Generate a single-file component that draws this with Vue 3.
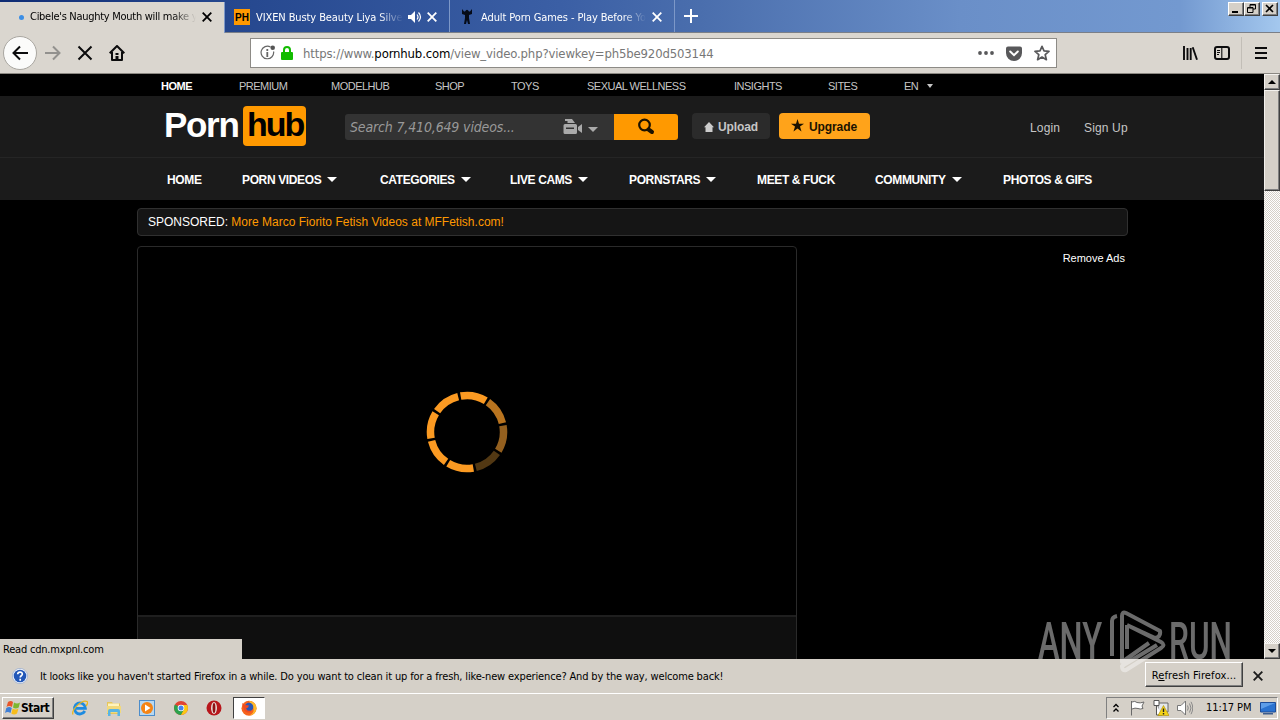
<template>
  <div class="screen">
    <header class="tabs">
      <div v-for="tab in tabs" :key="tab.title" class="tab" :class="{ active: tab.active }">
        <span v-if="tab.icon === 'dot'" class="tab-icon"><i class="loading-dot"></i></span>
        <span v-else-if="tab.icon === 'ph'" class="tab-icon ph">PH</span>
        <svg v-else class="tab-icon" viewBox="0 0 16 16">
          <path d="M3 0l2 2.500h1Q8-1 10 2.500h1L13 0v5l-3 1v3l1 6H9l-1-4-1 4H5l1-6V6L3 5z" fill="#050b18" />
        </svg>
        <span class="tab-title">{{ tab.title }}</span>
        <svg v-if="tab.sound" class="sound" viewBox="0 0 14 14">
          <path d="M0 5h3l4-4v12L3 9H0z" fill="currentColor" />
          <path d="M9 4.500q2 2.500 0 5M10.500 2.500q4 4.500 0 9" fill="none" stroke="currentColor" stroke-width="1.200" />
        </svg>
        <svg class="tab-close" viewBox="0 0 10 10">
          <path d="M.7.7l8.600 8.600M9.300.7L.7 9.300" stroke="currentColor" stroke-width="1.800" />
        </svg>
      </div>
      <svg class="new-tab" viewBox="0 0 14 14">
        <path d="M7 0v14M0 7h14" stroke="#fff" stroke-width="2" />
      </svg>
      <div class="window-buttons">
        <span class="win-btn"><svg viewBox="0 0 13 11"><path d="M3 9h6" stroke="#000" stroke-width="2" /></svg></span>
        <span class="win-btn"><svg viewBox="0 0 13 11"><path d="M5 4V1.500h5.500V6H8M5 2h5M2.500 4.500H8V9.500H2.500zM3 5h5" fill="none" stroke="#000" /></svg></span>
        <span class="win-btn close"><svg viewBox="0 0 13 11"><path d="M3 2l7 7M10 2L3 9" stroke="#000" stroke-width="1.600" /></svg></span>
      </div>
    </header>

    <div class="toolbar">
      <span class="back">
        <svg viewBox="0 0 16 16"><path d="M16 8H1.500M8 1.500L1.500 8 8 14.500" fill="none" stroke="#0c0c0d" stroke-width="2" /></svg>
      </span>
      <svg class="tool forward" viewBox="0 0 16 16"><path d="M0 8h14.500M8 1.500L14.500 8 8 14.500" fill="none" stroke="#92918e" stroke-width="2" /></svg>
      <svg class="tool stop" viewBox="0 0 16 16"><path d="M1.500 1.500l13 13M14.500 1.500l-13 13" stroke="#0c0c0d" stroke-width="2" /></svg>
      <svg class="tool home" viewBox="0 0 16 16">
        <path d="M.7 8.300L8 1l7.300 7.300M3 7v8h10V7" fill="none" stroke="#0c0c0d" stroke-width="2" stroke-linejoin="round" />
        <path d="M6.500 8h3v2h-3zM6.500 11h3v4h-3z" fill="#0c0c0d" />
      </svg>
      <div class="urlbar">
        <svg class="info" viewBox="0 0 16 16">
          <path d="M10.500 2A6.300 6.300 0 1 0 13.600 6.500" fill="none" stroke="#666" stroke-width="1.200" />
          <path d="M7.300 4v2M7.300 7v5" stroke="#666" stroke-width="1.800" />
          <circle cx="12.700" cy="2.800" r="2.300" fill="#555" />
        </svg>
        <svg class="lock" viewBox="0 0 12 14">
          <path d="M3 7V4a3 3 0 0 1 6 0v3" fill="none" stroke="#12bc00" stroke-width="2" />
          <rect y="6" width="12" height="8" rx="1" fill="#12bc00" />
        </svg>
        <span class="url">https://www.<b>pornhub.com</b>/view_video.php?viewkey=ph5be920d503144</span>
        <svg class="dots" viewBox="0 0 16 4"><circle v-for="x in [2, 8, 14]" :key="x" :cx="x" cy="2" r="1.900" fill="#58585a" /></svg>
        <svg class="pocket" viewBox="0 0 16 15">
          <path d="M2 .5h12a2 2 0 0 1 2 2V7a8 8 0 0 1-16 0V2.500a2 2 0 0 1 2-2z" fill="#58585a" />
          <path d="M4.200 5.500L8 9.200l3.800-3.700" fill="none" stroke="#fff" stroke-width="2" stroke-linecap="round" />
        </svg>
        <svg class="star" viewBox="0 0 16 16">
          <path d="M8 1.300l2 4.600 5 .5-3.800 3.300 1.200 5L8 12l-4.400 2.700 1.200-5L1 6.400l5-.5z" fill="none" stroke="#58585a" stroke-width="1.700" stroke-linejoin="round" />
        </svg>
      </div>
      <svg class="library" viewBox="0 0 16 16"><path d="M2 1v14M5.500 3v12M8.700 3v12M10.700 2.300l4.300 12.500" fill="none" stroke="#0c0c0d" stroke-width="1.900" /></svg>
      <svg class="sidebar" viewBox="0 0 16 14">
        <rect x="1" y="1" width="14" height="12" rx="2" fill="none" stroke="#0c0c0d" stroke-width="2" />
        <path d="M7.800 1v12M3 4.500h3M3 6.500h3M3 8.500h2" stroke="#0c0c0d" stroke-width="1.100" />
      </svg>
      <i class="divider"></i>
      <svg class="menu" viewBox="0 0 12 12"><path d="M0 1h12M0 6h12M0 11h12" stroke="#0c0c0d" stroke-width="2" /></svg>
    </div>

    <div class="viewport">
      <main class="page">
        <nav class="network">
          <span v-for="(link, i) in networkLinks" :key="link" :class="{ current: i === 0 }">{{ link }}<i v-if="link === 'EN'" class="caret small"></i></span>
        </nav>
        <div class="head">
          <div class="logo"><span>Porn</span><span class="hub">hub</span></div>
          <div class="search">
            <span class="placeholder">Search 7,410,649 videos...</span>
            <svg class="camera" viewBox="0 0 20 16">
              <path d="M2 0h7l3 4H4.500V2H2z" fill="#aaa" />
              <path fill-rule="evenodd" d="M2 5h10.500A1.500 1.500 0 0 1 14 6.500v7a1.500 1.500 0 0 1-1.500 1.500H2A1.500 1.500 0 0 1 .5 13.500v-7A1.500 1.500 0 0 1 2 5zM3 8.500V10h8V8.500z" fill="#aaa" />
              <path d="M15 8l4-3v9l-4-3z" fill="#aaa" />
            </svg>
            <i class="caret grey"></i>
          </div>
          <span class="search-btn">
            <svg viewBox="0 0 18 18"><circle cx="7.500" cy="7" r="5.300" fill="none" stroke="#1b1200" stroke-width="2.200" /><path d="M11.500 11.500l3.500 2.500" stroke="#1b1200" stroke-width="4" stroke-linecap="round" /></svg>
          </span>
          <span class="upload">
            <svg viewBox="0 0 10 10"><path d="M5 0l5 5.200H8.500V10h-7V5.200H0z" fill="#ccc" /></svg>
            <b>Upload</b>
          </span>
          <span class="upgrade">
            <svg viewBox="0 0 14 14"><path d="M7 0l1.600 5H14L9.700 8.200 11.300 13.500 7 10.300 2.700 13.500 4.300 8.200 0 5h5.400z" fill="#1b1200" /></svg>
            <b>Upgrade</b>
          </span>
          <span class="login">Login</span>
          <span class="signup">Sign Up</span>
        </div>
        <nav class="main-nav">
          <span v-for="item in menu" :key="item.label">{{ item.label }}<i v-if="item.more" class="caret"></i></span>
        </nav>
        <div class="sponsored"><span>SPONSORED:</span> <a>More Marco Fiorito Fetish Videos at MFFetish.com!</a></div>
        <div class="content">
          <section class="player">
            <div class="video">
              <svg class="spinner" viewBox="-42 -42 84 84">
                <circle
                  v-for="(color, i) in spinner"
                  :key="i"
                  r="36.500"
                  fill="none"
                  :stroke="color"
                  stroke-width="7.500"
                  pathLength="360"
                  stroke-dasharray="41 319"
                  :transform="`rotate(${i * 45 - 100})`"
                />
              </svg>
            </div>
            <div class="player-footer"></div>
          </section>
          <span class="remove-ads">Remove Ads</span>
        </div>
        <div class="status">Read cdn.mxpnl.com</div>
      </main>
      <div class="scrollbar">
        <span class="scroll-btn"><i class="up"></i></span>
        <span class="thumb"></span>
        <span class="scroll-btn bottom"><i class="down"></i></span>
      </div>
    </div>

    <div class="notification">
      <svg class="help" viewBox="0 0 16 16">
        <circle cx="8" cy="8" r="7.600" fill="#eef3fb" stroke="#8ba3cc" stroke-width=".6" />
        <circle cx="8" cy="8" r="6.300" fill="#2257b8" />
        <path d="M5.700 6.300C5.800 3.300 10.500 3.500 10.300 6.200 10.200 7.800 8.200 7.700 8.200 9.500M8.200 10.800v2" fill="none" stroke="#fff" stroke-width="1.700" />
      </svg>
      <span class="message">It looks like you haven't started Firefox in a while. Do you want to clean it up for a fresh, like-new experience? And by the way, welcome back!</span>
      <span class="refresh">R<u>e</u>fresh Firefox...</span>
      <svg class="dismiss" viewBox="0 0 10 10"><path d="M.7.7l8.600 8.600M9.300.7L.7 9.300" stroke="#1c1c1c" stroke-width="1.900" /></svg>
    </div>

    <footer class="taskbar">
      <span class="start">
        <svg viewBox="0 0 16 15">
          <path d="M3 2q3-2 5 0L7 7q-3-2-5.500 0z" fill="#e8562a" />
          <path d="M9 2.500q3 2 6 0L13.700 7.500q-3 2-5.700 0z" fill="#7db72f" />
          <path d="M1.300 8q3-2 5.500 0L5.500 13q-3-2-5.500 0z" fill="#3f7fd6" />
          <path d="M7.700 8.500q3 2 5.800 0L12 13.500q-3 2-5.700 0z" fill="#f7bd1c" />
        </svg>
        <b>Start</b>
      </span>
      <svg class="app" viewBox="0 0 16 16">
        <path d="M12.800 11A5.500 5.500 0 1 1 13.400 8.300H4" fill="none" stroke="#1d8be0" stroke-width="2.800" />
        <path d="M1 14.500C-1 10 10-1 15 1.500c1.300 1 .2 3-1 4.500" fill="none" stroke="#e9b71d" stroke-width="1.300" />
      </svg>
      <svg class="app" viewBox="0 0 16 16">
        <path d="M1 2h5l1 1.500h7V14H1z" fill="#e6c65c" />
        <path d="M2 3.500h11V8H2z" fill="#fff3bd" />
        <path d="M1 6h14v7H1z" fill="#f2d97b" />
        <path d="M2 16v-5q0-2 2-2h8q2 0 2 2v5h-2.500v-4h-7v4z" fill="#58b4e4" />
      </svg>
      <svg class="app" viewBox="0 0 16 16">
        <rect x=".5" y=".5" width="15" height="15" fill="#b7d8f1" stroke="#4c8dcb" />
        <circle cx="8" cy="8" r="6" fill="#f58414" />
        <path d="M6 4.500L11.500 8 6 11.500z" fill="#fff" />
      </svg>
      <svg class="app" viewBox="0 0 16 16">
        <circle cx="8" cy="8" r="7" fill="#e04434" />
        <path d="M8 8L1.900 4.600A7 7 0 0 0 8 15l3.500-6z" fill="#2ca24c" />
        <path d="M8 15a7 7 0 0 0 6.200-10H8l3 4.500z" fill="#fbc814" />
        <circle cx="8" cy="8" r="3.300" fill="#fff" />
        <circle cx="8" cy="8" r="2.500" fill="#4484ee" />
      </svg>
      <svg class="app" viewBox="0 0 16 16">
        <circle cx="8" cy="8" r="7.500" fill="#b8161c" />
        <ellipse cx="8" cy="8" rx="3" ry="6" fill="#e6d9d5" />
        <ellipse cx="8" cy="8" rx="1.400" ry="5" fill="#8e1014" />
      </svg>
      <span class="running">
        <svg viewBox="0 0 16 16">
          <circle cx="8" cy="8.300" r="7.500" fill="#f6631c" />
          <path d="M8 1c4 0 7.500 3 7.500 7s-3 7-7 7.500c4-2 5-5 3.500-8S9 4 8 1z" fill="#fdb92a" />
          <circle cx="8" cy="7" r="4.300" fill="#2a57b7" />
          <path d="M1 3l3 2 4 .5-1 2-2 1 1.500 2 4 .2C9 13.500 5 13 3 10z" fill="#ef4b22" />
        </svg>
      </span>
      <div class="tray">
        <svg class="chevrons" viewBox="0 0 6 10"><path d="M.5 4L3 1.500 5.500 4M.5 8.500L3 6l2.500 2.500" fill="none" stroke="#000" stroke-width="1.300" /></svg>
        <svg class="tray-icon" viewBox="0 0 16 16"><path d="M2.500 1v14.500M3 2q3-1.500 5 .5 3 1 7-.5l-2 4 1 2.500q-3 1-5 0Q6 7.500 3 9" fill="#fff" stroke="#6a6a6a" /></svg>
        <svg class="tray-icon net" viewBox="0 0 16 16">
          <path d="M5 3h10v9H5z" fill="#e4e7ea" stroke="#666" />
          <path d="M1 .5h5v5H1zM3.500 5v10H9" fill="#fff" stroke="#555" />
          <path d="M10.500 5.500l5.500 10H5z" fill="#f5d316" stroke="#a98c00" stroke-width=".6" />
          <path d="M10.500 8.500v3.500M10.500 13v1.500" stroke="#222" stroke-width="1.400" />
        </svg>
        <svg class="tray-icon vol" viewBox="0 0 16 16">
          <path d="M.5 5.500H4L8.500 1v14L4 10.500H.5z" fill="#fff" stroke="#777" />
          <path d="M10.500 5.500q1.500 2.500 0 5M12.500 3.500q3 4.500 0 9M14 1.800q3.500 6.200 0 12.400" fill="none" stroke="#888" />
        </svg>
        <span class="clock">11:17 PM</span>
        <svg class="desktop" viewBox="0 0 16 14">
          <path d="M.5 1.500h15v9.500H.5z" fill="#2a72cf" stroke="#1d4c98" />
          <path d="M1 2h14L1 8z" fill="#5d9de8" />
          <path d="M3 12h10v1.500H3z" fill="#3c5c8c" />
        </svg>
      </div>
    </footer>

    <svg class="watermark" viewBox="0 0 200 70">
      <g class="wm-text">
        <text x="0" y="53" textLength="64" lengthAdjust="spacingAndGlyphs">ANY</text>
        <text x="131" y="53" textLength="63" lengthAdjust="spacingAndGlyphs">RUN</text>
      </g>
      <path
        d="M74 50V15q0-4 5-5M89 19l28 13q6-1 5-7L88 7q-4-2-4 3v46l27-19M89 19v24M89 19l34 17q5 3 0 6L88 64q-4 1-4-4l35-21"
        fill="none"
        stroke="#fff"
        stroke-width="4"
        stroke-linejoin="round"
      />
    </svg>
  </div>
</template>

<script setup>
const tabs = [
  { title: "Cibele's Naughty Mouth will make yo", icon: 'dot', active: true },
  { title: 'VIXEN Busty Beauty Liya Silver', icon: 'ph', sound: true },
  { title: 'Adult Porn Games - Play Before You', icon: 'game' }
]

const networkLinks = ['HOME', 'PREMIUM', 'MODELHUB', 'SHOP', 'TOYS', 'SEXUAL WELLNESS', 'INSIGHTS', 'SITES', 'EN']

const menu = [
  { label: 'HOME' },
  { label: 'PORN VIDEOS', more: true },
  { label: 'CATEGORIES', more: true },
  { label: 'LIVE CAMS', more: true },
  { label: 'PORNSTARS', more: true },
  { label: 'MEET & FUCK' },
  { label: 'COMMUNITY', more: true },
  { label: 'PHOTOS & GIFS' }
]

const spinner = ['#fb9a22', '#b9741f', '#94601f', '#523813', '#fb9a22', '#fb9a22', '#fb9a22', '#fb9a22']
</script>

<style>
body {
  margin: 0;
  overflow: hidden;
}
</style>

<style scoped>
.screen {
  position: relative;
  display: flex;
  flex-direction: column;
  width: 1280px;
  height: 720px;
  overflow: hidden;
  background: #d5d0c8;
  color: #000;
  font-family: "DejaVu Sans Condensed", "DejaVu Sans", sans-serif;
  font-stretch: condensed;
  font-size: 11px;
  white-space: nowrap;
}

.screen * {
  box-sizing: border-box;
}

svg {
  display: block;
  flex: none;
}

/* tab strip */
.tabs {
  display: flex;
  height: 33px;
  background: linear-gradient(90deg, #0f2c74 0, #25478e 225px, #3b5fa5 560px, #4a6ead 700px, #6a8fc8 960px, #7399d0 1180px, #a4c8ee 1280px);
  border-bottom: 1px solid #7a7f88;
}

.tab {
  display: flex;
  align-items: center;
  width: 225px;
  height: 32px;
  padding: 2px 12px 0 9px;
  color: #fff;
  border-right: 1px solid #7d98c8;
}

.tab.active {
  height: 31px;
  margin-top: 2px;
  padding: 0 12px 2px 14px;
  background: #dad6cf;
  color: #000;
}

.tab-icon {
  flex: none;
  width: 16px;
  height: 16px;
  margin-right: 6px;
}

.active .tab-icon {
  margin-right: 0;
}

.loading-dot {
  display: block;
  width: 5px;
  height: 5px;
  margin: 6px 0 0 5px;
  border-radius: 50%;
  background: #3b8ee5;
}

.ph {
  background: #f90;
  color: #000;
  font: bold 10px/17px "Liberation Sans", sans-serif;
  text-align: center;
}

.tab-title {
  flex: 1;
  overflow: hidden;
  letter-spacing: -0.1px;
  mask-image: linear-gradient(90deg, #000 calc(100% - 24px), transparent);
}

.active .tab-title {
  letter-spacing: -0.28px;
}

.sound {
  width: 14px;
  height: 14px;
  margin: 0 5px 0 5px;
}

.tab-close {
  width: 10px;
  height: 10px;
  margin-left: 6px;
}

.sound + .tab-close {
  margin-left: 0;
}

.new-tab {
  width: 14px;
  height: 14px;
  margin: 9px 0 0 9px;
}

.window-buttons {
  display: flex;
  margin: 2px 2px 0 auto;
}

.win-btn {
  width: 16px;
  height: 14px;
  background: #d5d0c8;
  border: 1px solid;
  border-color: #fff #404040 #404040 #fff;
  box-shadow: inset -1px -1px #808080;
}

.win-btn.close {
  margin-left: 2px;
}

.win-btn svg {
  width: 13px;
  height: 11px;
}

/* toolbar */
.toolbar {
  display: flex;
  align-items: center;
  height: 41px;
  padding-left: 3px;
  background: #dad6cf;
  border-bottom: 1px solid #8b8882;
}

.back {
  display: flex;
  align-items: center;
  justify-content: center;
  width: 34px;
  height: 34px;
  border: 1px solid #a9a6a0;
  border-radius: 50%;
  background: #fbfbfa;
}

.back svg,
.tool {
  width: 16px;
  height: 16px;
}

.forward {
  margin-left: 8px;
}

.stop {
  margin-left: 16px;
}

.home {
  margin-left: 16px;
}

.urlbar {
  display: flex;
  align-items: center;
  width: 807px;
  height: 30px;
  margin-left: 125px;
  padding: 0 6px 0 9px;
  background: #fff;
  border: 1px solid #8d8b86;
}

.info {
  width: 16px;
  height: 16px;
}

.lock {
  width: 12px;
  height: 14px;
  margin: 0 10px 0 5px;
}

.url {
  color: #777;
  font-size: 13px;
  letter-spacing: -0.15px;
}

.url b {
  color: #000;
  font-weight: normal;
}

.dots {
  width: 16px;
  height: 4px;
  margin-left: auto;
}

.pocket {
  width: 16px;
  height: 15px;
  margin-left: 12px;
}

.star {
  width: 16px;
  height: 16px;
  margin-left: 12px;
}

.library {
  width: 16px;
  height: 16px;
  margin-left: 125px;
}

.sidebar {
  width: 16px;
  height: 14px;
  margin-left: 16px;
}

.divider {
  width: 1px;
  height: 32px;
  margin-left: 11px;
  background: #c2beb7;
}

.menu {
  width: 12px;
  height: 12px;
  margin-left: 13px;
}

/* page */
.viewport {
  display: flex;
  height: 585px;
}

.page {
  position: relative;
  width: 1264px;
  height: 585px;
  overflow: hidden;
  background: #000;
  color: #fff;
  font-family: "Liberation Sans", Arial, sans-serif;
  font-stretch: normal;
}

.network {
  display: grid;
  grid-template-columns: 78px 92px 104px 76px 76px 147px 94px 76px auto;
  height: 22px;
  padding-left: 161px;
  line-height: 24px;
  color: #c6c6c6;
  letter-spacing: -0.5px;
}

.network .current {
  color: #fff;
  font-weight: bold;
}

.caret {
  display: inline-block;
  margin-left: 6px;
  border: 5px solid transparent;
  border-top-color: #fff;
  border-bottom: 0;
  vertical-align: 2px;
}

.caret.small {
  margin-left: 9px;
  border-width: 4px 3px 0;
  border-top-color: #c6c6c6;
}

.caret.grey {
  margin: 5px 0 0 5px;
  border-top-color: #aaa;
}

.head {
  display: flex;
  height: 62px;
  padding: 10px 0 0 164px;
  background: #1b1b1b;
  border-bottom: 1px solid #252525;
}

.logo {
  display: flex;
  width: 142px;
  height: 40px;
  font: bold 35px/37px "Liberation Sans", sans-serif;
  letter-spacing: -1.3px;
}

.logo > span:first-child {
  width: 79px;
}

.logo .hub {
  width: 63px;
  height: 40px;
  padding-left: 4px;
  border-radius: 4px;
  background: #f90;
  color: #000;
  font-size: 34px;
  letter-spacing: -2px;
}

.search {
  display: flex;
  align-items: center;
  width: 269px;
  height: 26px;
  margin: 8px 0 0 39px;
  padding: 0 16px 0 5px;
  background: #333;
  border-radius: 3px 0 0 3px;
}

.placeholder {
  flex: 1;
  color: #999;
  font: italic 14px "DejaVu Sans Condensed", "DejaVu Sans", sans-serif;
  letter-spacing: -0.15px;
}

.camera {
  width: 20px;
  height: 16px;
}

.search-btn {
  display: flex;
  align-items: center;
  justify-content: center;
  width: 64px;
  height: 26px;
  margin-top: 8px;
  background: #f90;
  border-radius: 0 3px 3px 0;
}

.search-btn svg {
  width: 18px;
  height: 18px;
}

.upload,
.upgrade {
  display: flex;
  align-items: center;
  height: 26px;
  margin: 7px 0 0 14px;
  padding-top: 1px;
  border-radius: 4px;
  font-size: 12px;
  letter-spacing: -0.1px;
}

.upload {
  width: 78px;
  padding-left: 12px;
  background: #2b2b2b;
  color: #c6c6c6;
}

.upload svg {
  width: 10px;
  height: 10px;
  margin-right: 4px;
}

.upgrade {
  width: 91px;
  margin-left: 9px;
  padding-left: 12px;
  background: #ffa31a;
  color: #1b1200;
}

.upgrade svg {
  width: 13px;
  height: 13px;
  margin: 0 5px 2px 0;
}

.login,
.signup {
  width: 54px;
  margin: 15px 0 0 160px;
  color: #c6c6c6;
  font-size: 12px;
  letter-spacing: 0.15px;
}

.signup {
  margin-left: 0;
}

.main-nav {
  display: grid;
  grid-template-columns: 75px 138px 130px 119px 128px 118px 128px auto;
  height: 42px;
  padding-left: 167px;
  background: #1b1b1b;
  font-size: 12px;
  font-weight: bold;
  line-height: 44px;
  letter-spacing: -0.37px;
}

.sponsored {
  width: 991px;
  height: 28px;
  margin: 8px 0 0 137px;
  padding-left: 10px;
  border: 1px solid #303030;
  border-radius: 4px;
  background: #151515;
  font-size: 12px;
  line-height: 26px;
}

.sponsored a {
  color: #f90;
}

.content {
  display: flex;
  justify-content: space-between;
  width: 988px;
  margin: 10px 0 0 137px;
}

.player {
  width: 660px;
  height: 420px;
  border: 1px solid #2a2a2a;
  border-radius: 4px 4px 0 0;
}

.video {
  display: flex;
  align-items: center;
  justify-content: center;
  height: 370px;
  padding-top: 2px;
  border-bottom: 2px solid #1f1f1f;
}

.spinner {
  width: 84px;
  height: 84px;
}

.player-footer {
  height: 48px;
  background: #0f0f0f;
}

.remove-ads {
  margin-top: 6px;
}

.status {
  position: absolute;
  left: 0;
  bottom: 0;
  width: 242px;
  height: 20px;
  padding-left: 3px;
  background: #d5d0c8;
  color: #000;
  font-family: "DejaVu Sans Condensed", "DejaVu Sans", sans-serif;
  line-height: 22px;
  letter-spacing: -0.2px;
}

/* scrollbar */
.scrollbar {
  display: flex;
  flex-direction: column;
  width: 16px;
  background: repeating-conic-gradient(#fff 0 25%, #d5d0c8 0 50%) 0 0 / 2px 2px;
}

.scroll-btn,
.thumb {
  display: flex;
  align-items: center;
  justify-content: center;
  height: 16px;
  background: #d5d0c8;
  border: 1px solid;
  border-color: #f4f2ee #404040 #404040 #f4f2ee;
  box-shadow: inset -1px -1px #808080;
}

.thumb {
  height: 101px;
}

.bottom {
  margin-top: auto;
}

.up,
.down {
  border: 4px solid transparent;
  border-top: 0;
  border-bottom-color: #000;
}

.down {
  border-top: 4px solid #000;
  border-bottom: 0;
}

/* notification bar */
.notification {
  display: flex;
  align-items: center;
  height: 34px;
  padding: 0 17px 0 12px;
}

.help {
  width: 16px;
  height: 16px;
  margin-right: 12px;
}

.message {
  flex: 1;
  letter-spacing: -0.15px;
}

.refresh {
  width: 98px;
  height: 25px;
  margin: -3px 10px 0 0;
  border: 1px solid;
  border-color: #fff #404040 #404040 #fff;
  box-shadow: inset -1px -1px #808080;
  line-height: 25px;
  text-align: center;
  letter-spacing: 0.1px;
}

.dismiss {
  width: 10px;
  height: 10px;
}

/* taskbar */
.taskbar {
  display: flex;
  align-items: center;
  height: 27px;
  padding: 1px 2px 0;
  border-top: 1px solid #fff;
}

.start {
  display: flex;
  align-items: center;
  width: 52px;
  height: 22px;
  margin-right: 18px;
  padding-left: 2px;
  border: 1px solid;
  border-color: #fff #404040 #404040 #fff;
  box-shadow: inset -1px -1px #808080;
  font-size: 12px;
  letter-spacing: -0.5px;
}

.start svg {
  width: 16px;
  height: 15px;
}

.app {
  width: 16px;
  height: 16px;
  margin-right: 17.5px;
}

.running {
  display: flex;
  align-items: center;
  justify-content: center;
  width: 32px;
  height: 22px;
  margin-left: -7px;
  background: #fff;
  border: 1px solid;
  border-color: #404040 #fff #fff #404040;
}

.running svg {
  width: 16px;
  height: 16px;
}

.tray {
  display: flex;
  align-items: center;
  width: 172px;
  height: 22px;
  margin-left: auto;
  padding-left: 6px;
  border: 1px solid;
  border-color: #808080 #fff #fff #808080;
}

.chevrons {
  width: 6px;
  height: 10px;
}

.tray-icon {
  width: 16px;
  height: 16px;
  margin-left: 10px;
}

.net,
.vol {
  margin-left: 8px;
}

.clock {
  width: 46px;
  margin-left: 13px;
  letter-spacing: -0.1px;
}

.desktop {
  width: 16px;
  height: 14px;
  margin-left: 8px;
}

.watermark {
  position: absolute;
  left: 1038px;
  top: 606px;
  width: 200px;
  height: 70px;
  opacity: 0.42;
}

.wm-text {
  fill: #fff;
  font: 500 52px Roboto, sans-serif;
}
</style>
